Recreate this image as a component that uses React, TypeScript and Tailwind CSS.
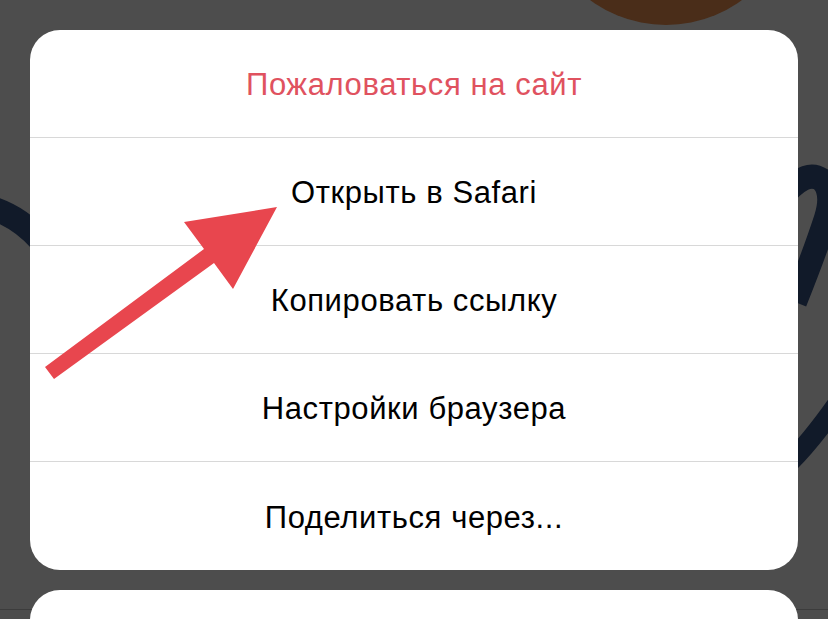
export default function App() {
  const items = [
    { label: 'Пожаловаться на сайт', danger: true },
    { label: 'Открыть в Safari' },
    { label: 'Копировать ссылку' },
    { label: 'Настройки браузера' },
    { label: 'Поделиться через...' },
  ]

  return (
    <div
      className="relative w-[828px] h-[619px] overflow-hidden bg-[#4d4d4d]"
      style={{ fontFamily: '"Liberation Sans", Arial, sans-serif' }}
    >
      {/* background decorations */}
      <div className="absolute left-[538px] top-[-231px] w-[256px] h-[256px] rounded-full bg-[#4a2d19]" />
      <svg className="absolute inset-0" width="828" height="619" viewBox="0 0 828 619" fill="none">
        <path d="M-20 205 Q15 212 40 240" stroke="#111a29" strokeWidth="24" />
        <path d="M780 200 Q805 168 822 180 Q834 192 826 218 Q815 252 795 302" stroke="#111a29" strokeWidth="24" />
        <path d="M790 462 Q812 440 840 400" stroke="#111a29" strokeWidth="20" />
      </svg>
      <div className="absolute left-0 right-0 top-[609px] h-px bg-[#3c3c3c]" />

      <div className="relative flex flex-col gap-5 px-[30px] pt-[30px]">
        {/* action sheet */}
        <div className="bg-white rounded-[30px] overflow-hidden">
          {items.map((item, i) => (
            <div
              key={item.label}
              className={
                'flex items-center justify-center pt-[4px] text-[31px] tracking-[0.6px] ' +
                (i < items.length - 1 ? 'h-[108px] border-b border-[#d8d8d8] ' : 'h-[108px] ') +
                (item.danger ? 'text-[#e0525f]' : 'text-black')
              }
            >
              {item.label}
            </div>
          ))}
        </div>

        {/* cancel */}
        <div className="bg-white rounded-[30px] h-[108px]" />
      </div>

      {/* arrow */}
      <svg className="absolute inset-0 pointer-events-none" width="828" height="619" viewBox="0 0 828 619">
        <polygon
          points="45,367 54,379 214,263 233,289 277,207 184,222 204,249"
          fill="#e8464e"
        />
      </svg>
    </div>
  )
}
